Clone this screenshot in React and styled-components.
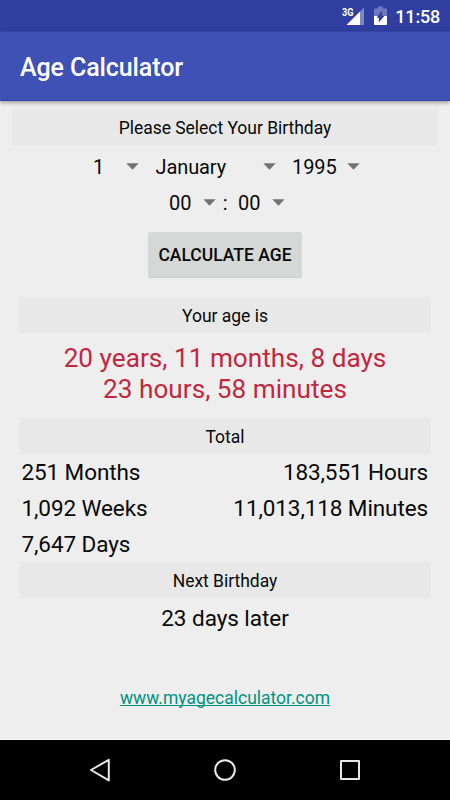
import React from "react";
import styled, { createGlobalStyle } from "styled-components";

const GlobalStyle = createGlobalStyle`
  * {
    box-sizing: border-box;
  }

  body {
    margin: 0;
    background: #eee;
    font-family: Roboto, sans-serif;
  }
`;

const Screen = styled.div`
  width: 450px;
  height: 800px;
  display: flex;
  flex-direction: column;
  overflow: hidden;
  background: #eee;
  color: #090909;
`;

const StatusBar = styled.header`
  height: 31px;
  flex: none;
  display: flex;
  align-items: center;
  justify-content: flex-end;
  padding: 1px 10px 0 0;
  background: #303f9f;
  color: #fff;

  svg {
    display: block;
  }

  .battery {
    margin: 0 8px 0 10px;
  }

  .clock {
    width: 45px;
    font-size: 18px;
    font-weight: 500;
    line-height: 31px;
    letter-spacing: -0.2px;
    text-align: right;
    white-space: nowrap;
  }
`;

const AppBar = styled.div`
  height: 70px;
  flex: none;
  padding: 0 20px;
  background: #3f51b5;
  border-top: 1px solid #3545a0;
  border-bottom: 1px solid #2b44b4;
  box-shadow: 0 2px 4px rgba(0, 0, 0, 0.32);
  color: #fff;

  h1 {
    margin: 0;
    font-size: 25px;
    font-weight: 500;
    line-height: 72px;
    letter-spacing: -0.1px;
  }
`;

const Content = styled.main`
  flex: 1;
  display: flex;
  flex-direction: column;
  padding-top: 8px;
  border-bottom: 1px solid #fafafa;
`;

const SectionLabel = styled.h2`
  flex: none;
  height: 36px;
  margin: 0 ${(p) => (p.$wide ? "12px 0 12px" : "19px")};
  background: #e8e8e8;
  font-size: 17.5px;
  font-weight: 400;
  line-height: 39px;
  letter-spacing: -0.03px;
  text-align: center;
`;

const SpinnerRow = styled.div`
  display: flex;
  height: 36px;
  align-items: center;
  font-size: 20px;
  line-height: 36px;
  letter-spacing: -0.1px;
  padding-left: ${(p) => p.$indent}px;
`;

const Spinner = styled.div`
  display: flex;
  align-items: center;
  justify-content: space-between;
  width: ${(p) => p.$width}px;

  svg {
    display: block;
    margin-bottom: 2px;
  }
`;

const Colon = styled.span`
  width: 22px;
  text-align: center;
  padding-right: 4px;
`;

const CalculateButton = styled.button`
  flex: none;
  align-self: center;
  width: 154px;
  height: 46px;
  margin: 11px 0 19px;
  padding: 0;
  border: 0;
  border-radius: 3px;
  background: #d6d7d7;
  box-shadow: inset 0 -1px 0 #cccdcd;
  color: #090909;
  font: 500 17.5px/46px Roboto, sans-serif;
`;

const Age = styled.p`
  margin: 10px 0 14px;
  color: #c1283f;
  font-size: 26.2px;
  line-height: 30.5px;
  text-align: center;
`;

const Totals = styled.div`
  display: grid;
  grid-template-columns: auto auto;
  grid-auto-rows: 36px;
  justify-content: space-between;
  padding: 0 22px 0 21.5px;
  font-size: 22.5px;
  line-height: 37px;
  letter-spacing: -0.1px;

  span:nth-child(even) {
    text-align: right;
  }
`;

const NextBirthday = styled.p`
  margin: 0;
  font-size: 22.5px;
  line-height: 41px;
  letter-spacing: -0.05px;
  text-align: center;
`;

const SiteLink = styled.a`
  align-self: center;
  margin-top: auto;
  margin-bottom: 26px;
  color: #009281;
  font-size: 17.5px;
  line-height: 30px;
  text-decoration: underline;
  text-decoration-thickness: 1px;
  text-decoration-skip-ink: none;
`;

const NavBar = styled.nav`
  height: 60px;
  flex: none;
  background: #000;

  svg {
    display: block;
  }
`;

const Arrow = () => (
  <svg width="13" height="7" viewBox="0 0 13 7">
    <path d="M0.3 0.2h12.4L6.5 6.8z" fill="#737373" />
  </svg>
);

const SignalIcon = () => (
  <svg width="22" height="20" viewBox="0 0 22 20">
    <text
      x="0"
      y="9.5"
      fill="#fff"
      fontFamily="Roboto"
      fontSize="11.8"
      fontWeight="700"
      textLength="11.5"
      lengthAdjust="spacingAndGlyphs"
    >
      3G
    </text>
    <path d="M4.5 19L18 5.5V19z" fill="#fff" />
    <path d="M18 5.5L22 1.5V19h-4z" fill="#7c87c5" />
  </svg>
);

const BatteryIcon = () => (
  <svg className="battery" width="13" height="20" viewBox="0 0 13 20">
    <path d="M4 .5h5v2h3.3q.7 0 .7.8V10H0V3.3q0-.8.8-.8H4z" fill="#6d78bf" />
    <path d="M0 10h13v8.2q0 .8-.8.8H.8q-.8 0-.8-.8z" fill="#fff" />
    <path d="M8 4.8v5h2.6L4.8 16.6v-4.8H2.6z" fill="#303f9f" />
  </svg>
);

const spinners = [
  { value: "1", width: 46 },
  { value: "January", width: 120 },
  { value: "1995", width: 68 },
];

const totals = [
  "251 Months",
  "183,551 Hours",
  "1,092 Weeks",
  "11,013,118 Minutes",
  "7,647 Days",
];

const DateRow = styled(SpinnerRow)`
  margin-top: 4px;
  gap: 16.5px;
`;

const App = () => {
  return (
    <Screen>
      <GlobalStyle />
      <StatusBar>
        <SignalIcon />
        <BatteryIcon />
        <span className="clock">11:58</span>
      </StatusBar>
      <AppBar>
        <h1>Age Calculator</h1>
      </AppBar>
      <Content>
        <SectionLabel $wide>Please Select Your Birthday</SectionLabel>
        <DateRow $indent={93}>
          {spinners.map((s) => (
            <Spinner key={s.value} $width={s.width}>
              {s.value}
              <Arrow />
            </Spinner>
          ))}
        </DateRow>
        <SpinnerRow $indent={169}>
          <Spinner $width={47}>
            00
            <Arrow />
          </Spinner>
          <Colon>:</Colon>
          <Spinner $width={47}>
            00
            <Arrow />
          </Spinner>
        </SpinnerRow>
        <CalculateButton>CALCULATE AGE</CalculateButton>

        <SectionLabel>Your age is</SectionLabel>
        <Age>
          20 years, 11 months, 8 days
          <br />
          23 hours, 58 minutes
        </Age>

        <SectionLabel>Total</SectionLabel>
        <Totals>
          {totals.map((t) => (
            <span key={t}>{t}</span>
          ))}
        </Totals>

        <SectionLabel>Next Birthday</SectionLabel>
        <NextBirthday>23 days later</NextBirthday>
        <SiteLink href="#">www.myagecalculator.com</SiteLink>
      </Content>
      <NavBar>
        <svg width="450" height="60" viewBox="0 0 450 60">
          <g fill="none" stroke="#e8e8e8" strokeWidth="2" strokeLinejoin="round">
            <path d="M108.8 19.8v20.6L91 30z" />
            <circle cx="225" cy="30" r="9.8" />
            <rect x="341" y="21" width="18" height="18" />
          </g>
        </svg>
      </NavBar>
    </Screen>
  );
};

export default App;
